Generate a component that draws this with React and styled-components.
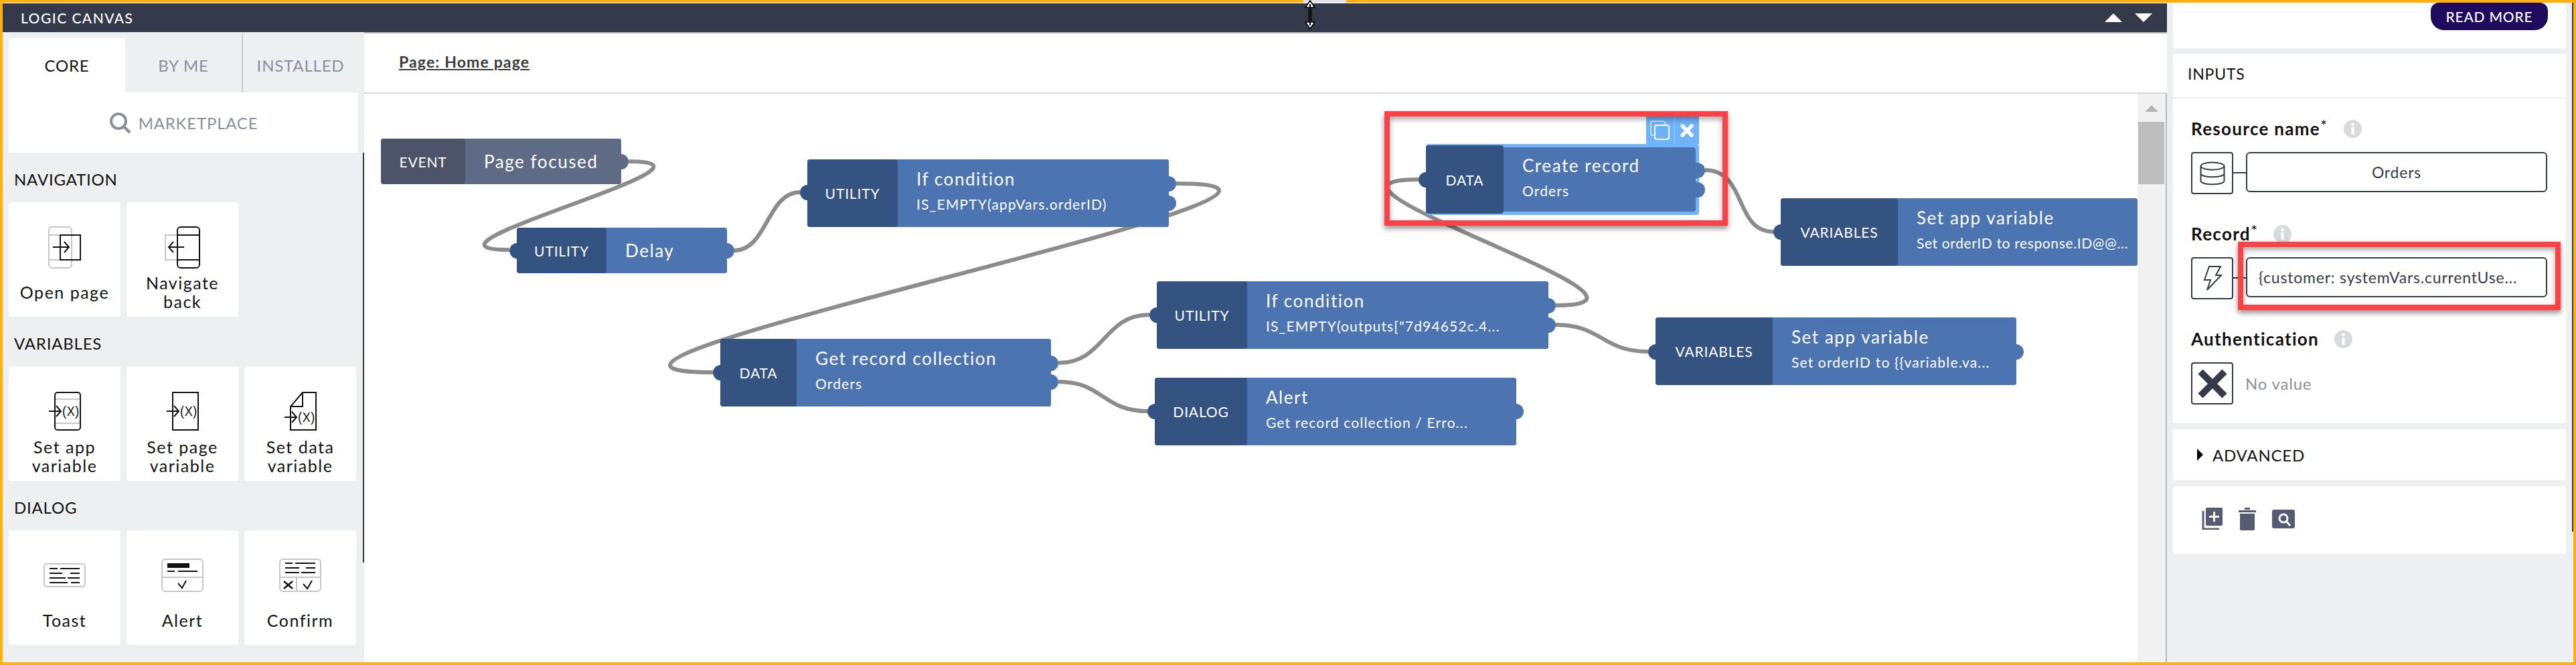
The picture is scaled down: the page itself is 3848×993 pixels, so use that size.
import React from "react";
import styled, { createGlobalStyle } from "styled-components";

const GlobalStyle = createGlobalStyle`
  html, body {
    margin: 0;
    padding: 0;
    overflow: hidden;
    background: #ffffff;
  }
  * {
    box-sizing: border-box;
  }
`
const FONT = `Lato, "Open Sans", "Liberation Sans", sans-serif`
const INK = "#353a4a"
const PANEL = "#eeeff1"
const SELECT = "#6eb3fb"

const Frame = styled.div`
  position: relative;
  width: 3848px;
  height: 993px;
  border: 4px solid #fdb00e;
  display: flex;
  font-family: ${FONT};
  letter-spacing: 0.05em;
  color: #111111;
  background: ${PANEL};
`
const TopNotch = styled.div`
  position: absolute;
  left: 1943px;
  top: -4px;
  width: 64px;
  height: 4px;
  background: #e0e0e6;
`
const Cursor = styled.svg`
  position: absolute;
  left: 1943px;
  top: -4px;
  z-index: 20;
`
const Main = styled.div`
  width: 3233px;
  display: flex;
  flex-direction: column;
`
const Header = styled.div`
  height: 44px;
  flex: none;
  border-top: 1px solid #ffffff;
  background: ${INK};
  display: flex;
  align-items: center;
  justify-content: space-between;
  padding: 0 22px 0 27px;
`
const HeaderTitle = styled.div`
  color: #ffffff;
  font-size: 21px;
  font-weight: 500;
  letter-spacing: 0.07em;
`
const HeaderArrows = styled.div`
  display: flex;
  gap: 19px;
`
const Triangle = styled.div`
  width: 0;
  height: 0;
  border-left: ${(p) => p.$w}px solid transparent;
  border-right: ${(p) => p.$w}px solid transparent;
  ${(p) => (p.$down ? "border-top" : "border-bottom")}: ${(p) => p.$h}px solid ${(p) => p.$color};
`
const Body = styled.div`
  flex: 1;
  min-height: 0;
  display: flex;
`
const LeftPanel = styled.div`
  position: relative;
  width: 540px;
  flex: none;
  padding: 0 9px;
  background: ${PANEL};
  &::after {
    content: "";
    position: absolute;
    right: 0;
    top: 180px;
    width: 2px;
    height: 612px;
    background: ${INK};
  }
`
const Tabs = styled.div`
  display: flex;
  height: 90px;
`
const Tab = styled.div`
  width: 174px;
  display: flex;
  align-items: center;
  justify-content: center;
  font-size: 24px;
  color: ${(p) => (p.$active ? "#111111" : "#8a8f9c")};
  background: ${(p) => (p.$active ? "#ffffff" : "transparent")};
  margin-top: ${(p) => (p.$active ? "9px" : "0")};
  padding-top: ${(p) => (p.$active ? "0" : "9px")};
  border-radius: 4px 4px 0 0;
  border-left: ${(p) => (p.$divider ? "2px solid #cfd0d4" : "none")};
`
const Marketplace = styled.div`
  height: 90px;
  width: 522px;
  background: #ffffff;
  display: flex;
  align-items: center;
  justify-content: center;
  gap: 11px;
  color: #8a8f9c;
  font-size: 24px;
`
const SectionLabel = styled.div`
  height: 74px;
  padding: 4px 0 0 8px;
  display: flex;
  align-items: center;
  font-size: 24px;
`
const CardGrid = styled.div`
  display: grid;
  grid-template-columns: repeat(3, 167px);
  column-gap: 9px;
`
const Card = styled.div`
  height: 171px;
  background: #ffffff;
  border-radius: 4px;
  padding-top: 28px;
  display: flex;
  flex-direction: column;
  align-items: center;
`
const CardIcon = styled.div`
  height: 78px;
  flex: none;
  display: flex;
  align-items: center;
  justify-content: center;
`
const CardLabel = styled.div`
  height: 56px;
  display: flex;
  align-items: center;
  text-align: center;
  font-size: 25px;
  line-height: 28px;
  letter-spacing: 0.06em;
`
const CanvasColumn = styled.div`
  flex: 1;
  min-width: 0;
  display: flex;
  flex-direction: column;
  background: #ffffff;
`
const PageBar = styled.div`
  height: 92px;
  flex: none;
  border-top: 2px solid #b9babd;
  border-bottom: 2px solid #d8d8de;
  display: flex;
  align-items: center;
  padding-left: 52px;
  padding-bottom: 4px;
`
const PageLink = styled.span`
  color: #3a3a3a;
  font-size: 23px;
  font-weight: 700;
  text-decoration: underline;
  letter-spacing: 0.05em;
`
const CanvasRow = styled.div`
  flex: 1;
  min-height: 0;
  display: flex;
`
const Stage = styled.div`
  position: relative;
  flex: 1;
  min-width: 0;
  overflow: hidden;
  background: #ffffff;
`
const Wires = styled.svg`
  position: absolute;
  left: 0;
  top: 0;
`
const CanvasScroll = styled.div`
  width: 44px;
  flex: none;
  background: #f1f1f1;
  border-right: 2px solid #b9babd;
  padding: 17px 2px 0 1px;
  display: flex;
  flex-direction: column;
  align-items: center;
`
const ScrollThumb = styled.div`
  width: 39px;
  height: 93px;
  margin-top: 15px;
  background: #bdbdbd;
`
const NodeBox = styled.div`
  position: absolute;
  left: ${(p) => p.$x}px;
  top: ${(p) => p.$y}px;
  width: ${(p) => p.$w}px;
  height: ${(p) => p.$h}px;
  display: flex;
  color: #ffffff;
  border-radius: 4px;
  background: ${(p) => (p.$selected ? SELECT : p.$event ? "#5f6a85" : "#4b74b1")};
`
const NodeLabel = styled.div`
  width: ${(p) => p.$w}px;
  flex: none;
  margin: ${(p) => (p.$selected ? "2px 0" : "0")};
  display: flex;
  align-items: center;
  justify-content: center;
  font-size: 21px;
  letter-spacing: 0.04em;
  border-radius: 4px;
  background: ${(p) => (p.$event ? "#4d5469" : "#345381")};
`
const NodeBody = styled.div`
  flex: 1;
  min-width: 0;
  margin: ${(p) => (p.$selected ? "5px 5px 5px 0" : "0")};
  padding: 0 0 ${(p) => (p.$double ? "7px" : "0")} 28px;
  display: flex;
  flex-direction: column;
  justify-content: center;
  gap: 10px;
  white-space: nowrap;
  overflow: hidden;
  background: ${(p) => (p.$event ? "#5f6a85" : "#4b74b1")};
  border-radius: 0 4px 4px 0;
`
const NodeTitle = styled.div`
  font-size: 26px;
  line-height: 30px;
  letter-spacing: 0.06em;
`
const NodeSub = styled.div`
  font-size: 21px;
  line-height: 26px;
  letter-spacing: ${(p) => (p.$tight ? "0.03em" : "0.055em")};
`
const Port = styled.div`
  position: absolute;
  width: 23px;
  height: 23px;
  border-radius: 50%;
  top: ${(p) => p.$y - 11.5}px;
  ${(p) => (p.$in ? "left: -11px;" : `right: ${p.$selected ? -9 : -11}px;`)}
  background: ${(p) => p.$color};
`
const NodeTools = styled.div`
  position: absolute;
  right: 0;
  top: -41px;
  height: 41px;
  background: ${SELECT};
  display: flex;
`
const NodeTool = styled.div`
  width: ${(p) => p.$w}px;
  display: flex;
  align-items: center;
  justify-content: center;
  border-right: ${(p) => (p.$divided ? "1px solid rgba(255, 255, 255, 0.3)" : "none")};
`
const RedBox = styled.div`
  position: absolute;
  left: ${(p) => p.$x}px;
  top: ${(p) => p.$y}px;
  width: ${(p) => p.$w}px;
  height: ${(p) => p.$h}px;
  border: 8px solid #ff4044;
  box-shadow: 0 4px 8px rgba(0, 0, 0, 0.45), inset 0 4px 8px rgba(0, 0, 0, 0.35);
  z-index: 10;
  pointer-events: none;
`
const RightPanel = styled.div`
  position: relative;
  flex: 1;
  min-width: 0;
  padding: 0 11px 0 9px;
  display: flex;
  flex-direction: column;
  gap: 9px;
  background: ${PANEL};
  &::after {
    content: "";
    position: absolute;
    right: 0;
    top: 0;
    width: 2px;
    height: 790px;
    background: ${INK};
  }
`
const InfoSection = styled.div`
  height: 68px;
  background: #ffffff;
  display: flex;
  justify-content: flex-end;
  align-items: flex-start;
  padding-right: 27px;
`
const ReadMore = styled.div`
  width: 175px;
  height: 41px;
  border-radius: 12px 12px 20px 20px;
  background: #1e0b5e;
  color: #ffffff;
  font-size: 21px;
  font-weight: 500;
  display: flex;
  align-items: center;
  justify-content: center;
`
const InputsSection = styled.div`
  height: 551px;
  background: #ffffff;
`
const InputsTitle = styled.div`
  height: 66px;
  border-bottom: 2px solid ${PANEL};
  padding: 0 0 6px 22px;
  display: flex;
  align-items: center;
  font-size: 23px;
`
const Fields = styled.div`
  padding: 10px 28px 0 27px;
`
const Field = styled.div`
  margin-bottom: 24px;
`
const FieldLabel = styled.div`
  height: 70px;
  display: flex;
  align-items: center;
  gap: 23px;
  font-size: 26px;
  font-weight: 700;
  letter-spacing: 0.05em;
  color: #111111;
`
const Asterisk = styled.span`
  font-size: 24px;
  font-weight: 400;
  line-height: 0;
  position: relative;
  top: -6px;
`
const FieldRow = styled.div`
  position: relative;
  display: flex;
  align-items: flex-start;
  height: 63px;
`
const IconBox = styled.div`
  width: 63px;
  height: 63px;
  flex: none;
  border: 2px solid ${INK};
  border-radius: 4px;
  display: flex;
  align-items: center;
  justify-content: center;
`
const Connector = styled.div`
  width: 19px;
  height: 2px;
  flex: none;
  margin-top: 30px;
  background: ${INK};
`
const ValueBox = styled.div`
  width: 450px;
  height: 60px;
  border: 2px solid ${INK};
  border-radius: 6px;
  display: flex;
  align-items: center;
  justify-content: ${(p) => (p.$left ? "flex-start" : "center")};
  padding-left: ${(p) => (p.$left ? "17px" : "0")};
  color: ${INK};
  font-size: 23px;
  white-space: nowrap;
  overflow: hidden;
`
const NoValue = styled.div`
  height: 63px;
  margin-left: 18px;
  display: flex;
  align-items: center;
  color: #8d8f96;
  font-size: 24px;
`
const FieldRedBox = styled(RedBox)`
  left: 70px;
  top: -23px;
  width: 482px;
  height: 102px;
`
const AdvancedSection = styled.div`
  height: 76px;
  background: #ffffff;
  display: flex;
  align-items: center;
  gap: 14px;
  padding-left: 36px;
  font-size: 24px;
`
const CaretRight = styled.div`
  width: 0;
  height: 0;
  border-top: 9px solid transparent;
  border-bottom: 9px solid transparent;
  border-left: 9px solid #000000;
`
const ActionsSection = styled.div`
  height: 101px;
  background: #ffffff;
  border-radius: 4px 4px 0 0;
  display: flex;
  align-items: center;
  padding: 0 0 4px 42px;
  gap: 24px;
`

// page coordinates of the stage corner, everything on the canvas below is measured from the page
const OX = 544
const OY = 140

const nodes = [
  { id: "event", x: 569, y: 207, w: 359, h: 68, lw: 126, label: "EVENT", title: "Page focused", event: true, outs: [34] },
  { id: "delay", x: 772, y: 340, w: 314, h: 68, lw: 134, label: "UTILITY", title: "Delay", ins: [34], outs: [34] },
  { id: "if1", x: 1206, y: 238, w: 540, h: 101, lw: 135, label: "UTILITY", title: "If condition", sub: "IS_EMPTY(appVars.orderID)", ins: [49], outs: [36, 65] },
  { id: "get", x: 1076, y: 506, w: 494, h: 101, lw: 114, label: "DATA", title: "Get record collection", sub: "Orders", ins: [50], outs: [36, 64] },
  { id: "create", x: 2130, y: 215, w: 408, h: 106, lw: 116, label: "DATA", title: "Create record", sub: "Orders", selected: true, ins: [53], outs: [39, 68] },
  { id: "vars1", x: 2660, y: 296, w: 533, h: 101, lw: 175, label: "VARIABLES", title: "Set app variable", sub: "Set orderID to response.ID@@...", tight: true, ins: [50] },
  { id: "if2", x: 1728, y: 420, w: 585, h: 101, lw: 135, label: "UTILITY", title: "If condition", sub: 'IS_EMPTY(outputs["7d94652c.4...', ins: [50], outs: [36, 65] },
  { id: "vars2", x: 2473, y: 474, w: 539, h: 101, lw: 175, label: "VARIABLES", title: "Set app variable", sub: "Set orderID to {{variable.va...", ins: [51], outs: [51] },
  { id: "alert", x: 1725, y: 564, w: 540, h: 101, lw: 138, label: "DIALOG", title: "Alert", sub: "Get record collection / Erro...", ins: [50], outs: [50] },
]

const wires = [
  "M939 241 C1119 241 581 373 761 373",
  "M1097 374 C1146 374 1146 287 1195 287",
  "M1757 274 C2137 274 685 556 1065 556",
  "M1581 542 C1650 542 1648 470 1717 470",
  "M1581 570 C1648 570 1647 614 1714 614",
  "M2324 456 C2544 456 1899 268 2119 268",
  "M2547 254 C2610 254 2590 346 2649 346",
  "M2324 485 C2393 485 2393 525 2462 525",
]

const stroke = { fill: "none", stroke: "#111111", strokeWidth: 2 }
const gray = { fill: "none", stroke: "#c5c6cc", strokeWidth: 2 }

const ArrowRight = ({ x1, x2, y }) => (
  <path d={`M${x1} ${y} H${x2} M${x2 - 7} ${y - 8} L${x2} ${y} L${x2 - 7} ${y + 8}`} {...stroke} />
)

const OpenPageIcon = () => (
  <svg width="50" height="63" viewBox="0 0 50 63">
    <rect x="1" y="1" width="34" height="61" rx="5" {...gray} />
    <path d="M1 13 H35 M1 50 H35" {...gray} />
    <rect x="18" y="13" width="30" height="37" {...stroke} />
    <ArrowRight x1={7} x2={31} y={31} />
  </svg>
)

const NavigateBackIcon = () => (
  <svg width="54" height="63" viewBox="0 0 54 63">
    <rect x="1" y="13" width="30" height="37" {...gray} />
    <rect x="19" y="1" width="33" height="61" rx="5" fill="#ffffff" stroke="#111111" strokeWidth="2" />
    <path d="M19 13 H52 M19 50 H52" {...stroke} />
    <path d="M29 31 H6 M13 23 L6 31 L13 39" {...stroke} />
  </svg>
)

const VarText = ({ x, y }) => (
  <text x={x} y={y} fontFamily="Liberation Sans, sans-serif" fontSize="21" fill="#111111" textLength="26" lengthAdjust="spacingAndGlyphs">
    (X)
  </text>
)

const VarSvg = ({ children }) => (
  <svg width="60" height="70" viewBox="-6 -6 60 70">{children}</svg>
)

const SetAppIcon = () => (
  <VarSvg>
    <rect x="9" y="1" width="38" height="56" rx="4" {...stroke} />
    <path d="M10 11 H46 M10 47 H46" {...gray} />
    <ArrowRight x1={0} x2={18} y={29} />
    <VarText x={20} y={36} />
  </VarSvg>
)

const SetPageIcon = () => (
  <VarSvg>
    <rect x="9" y="1" width="38" height="56" {...stroke} />
    <ArrowRight x1={0} x2={18} y={29} />
    <VarText x={20} y={36} />
  </VarSvg>
)

const SetDataIcon = () => (
  <VarSvg>
    <path d="M27 1 H47 V57 H9 V22 Z" {...stroke} />
    <path d="M27 1 V22 H9" {...stroke} />
    <ArrowRight x1={0} x2={18} y={38} />
    <VarText x={20} y={45} />
  </VarSvg>
)

const ToastIcon = () => (
  <svg width="63" height="36" viewBox="0 0 63 36">
    <rect x="1" y="1" width="61" height="34" rx="4" fill="none" stroke="#c5c6cc" strokeWidth="2" />
    <path d="M9 8 H21 M25 8 H54 M9 15 H28 M40 15 H54 M9 22 H33 M36 22 H54 M9 29 H36 M41 29 H54" {...stroke} />
  </svg>
)

const AlertIcon = () => (
  <svg width="63" height="50" viewBox="0 0 63 50">
    <rect x="1" y="1" width="61" height="48" rx="5" fill="none" stroke="#c5c6cc" strokeWidth="2" />
    <path d="M1 28 H62" {...gray} />
    <rect x="9" y="7" width="33" height="7" fill="#111111" />
    <path d="M9 19 H20 M25 19 H54" {...stroke} />
    <path d="M25 37 L31 44 L37 33" {...stroke} />
  </svg>
)

const ConfirmIcon = () => (
  <svg width="63" height="50" viewBox="0 0 63 50">
    <rect x="1" y="1" width="61" height="48" rx="5" fill="none" stroke="#c5c6cc" strokeWidth="2" />
    <path d="M1 28 H62 M26 28 V49" {...gray} />
    <path d="M9 7 H20 M24 7 H54 M9 14 H30 M40 14 H54 M9 21 H30 M33 21 H54" {...stroke} />
    <path d="M7 34 L20 45 M20 34 L7 45" fill="none" stroke="#111111" strokeWidth="2.5" />
    <path d="M36 38 L42 45 L49 33" {...stroke} />
  </svg>
)

const SearchIcon = () => (
  <svg width="33" height="33" viewBox="0 0 33 33">
    <circle cx="14" cy="14" r="11" fill="none" stroke="#8a8f9c" strokeWidth="4" />
    <path d="M22 22 L31 31" stroke="#8a8f9c" strokeWidth="4.5" />
  </svg>
)

const InfoIcon = () => (
  <svg width="27" height="27" viewBox="0 0 27 27">
    <circle cx="13.5" cy="13.5" r="13.5" fill="#d8dade" />
    <circle cx="13.5" cy="7" r="2.5" fill="#ffffff" />
    <rect x="11.5" y="11" width="4" height="11" fill="#ffffff" />
  </svg>
)

const DatabaseIcon = () => (
  <svg width="38" height="36" viewBox="0 0 38 36">
    <ellipse cx="19" cy="7" rx="17.5" ry="5.5" fill="none" stroke={INK} strokeWidth="2" />
    <path d="M1.5 7 V29 C1.5 36 36.5 36 36.5 29 V7 M1.5 18 C1.5 25 36.5 25 36.5 18" fill="none" stroke={INK} strokeWidth="2" />
  </svg>
)

const BoltIcon = () => (
  <svg width="28" height="38" viewBox="0 0 28 38">
    <path d="M9 1 H26 L19 14 H27 L6 36 L11 21 H2 Z" fill="none" stroke={INK} strokeWidth="2" />
  </svg>
)

const CrossIcon = () => (
  <svg width="46" height="46" viewBox="0 0 46 46">
    <path d="M5 5 L41 41 M41 5 L5 41" stroke={INK} strokeWidth="10" />
  </svg>
)

const CopyPlusIcon = () => (
  <svg width="32" height="33" viewBox="0 0 32 33">
    <path d="M3 5 V32 H27" fill="none" stroke="#545b73" strokeWidth="3" />
    <rect x="7" y="0" width="25" height="27" rx="2" fill="#545b73" />
    <path d="M19.5 6 V21 M12 13.5 H27" stroke="#ffffff" strokeWidth="3" />
  </svg>
)

const TrashIcon = () => (
  <svg width="26" height="34" viewBox="0 0 26 34">
    <path d="M0 4 H26 V7 H0 Z M9 0 H17 V3 H9 Z" fill="#545b73" />
    <path d="M2 9 H24 V32 Q24 34 22 34 H4 Q2 34 2 32 Z" fill="#545b73" />
  </svg>
)

const SearchSquareIcon = () => (
  <svg width="34" height="28" viewBox="0 0 34 28">
    <rect width="34" height="28" rx="3" fill="#545b73" />
    <circle cx="17" cy="13" r="6" fill="none" stroke="#ffffff" strokeWidth="3" />
    <path d="M21 17 L27 24" stroke="#ffffff" strokeWidth="3" />
  </svg>
)

const CopyToolIcon = () => (
  <svg width="30" height="30" viewBox="0 0 30 30">
    <rect x="1" y="1" width="21" height="21" rx="3" fill="none" stroke="#ffffff" strokeWidth="1.5" opacity="0.75" />
    <rect x="7" y="7" width="21" height="21" rx="3" fill={SELECT} stroke="#ffffff" strokeWidth="2" />
  </svg>
)

const CloseToolIcon = () => (
  <svg width="22" height="20" viewBox="0 0 22 20">
    <path d="M4 3 L18 17 M18 3 L4 17" stroke="#ffffff" strokeWidth="5.5" strokeLinecap="round" />
  </svg>
)

const paletteGroups = [
  {
    title: "NAVIGATION",
    items: [
      { label: "Open page", icon: <OpenPageIcon /> },
      { label: <>Navigate<br />back</>, icon: <NavigateBackIcon /> },
    ],
  },
  {
    title: "VARIABLES",
    items: [
      { label: <>Set app<br />variable</>, icon: <SetAppIcon /> },
      { label: <>Set page<br />variable</>, icon: <SetPageIcon /> },
      { label: <>Set data<br />variable</>, icon: <SetDataIcon /> },
    ],
  },
  {
    title: "DIALOG",
    items: [
      { label: "Toast", icon: <ToastIcon /> },
      { label: "Alert", icon: <AlertIcon /> },
      { label: "Confirm", icon: <ConfirmIcon /> },
    ],
  },
]

function FlowNode({ node }) {
  const bodyColor = node.event ? "#5f6a85" : "#4b74b1"
  const labelColor = node.event ? "#4d5469" : "#345381"
  return (
    <NodeBox $x={node.x - OX} $y={node.y - OY} $w={node.w} $h={node.h} $event={node.event} $selected={node.selected}>
      <NodeLabel $w={node.lw} $event={node.event} $selected={node.selected}>{node.label}</NodeLabel>
      <NodeBody $event={node.event} $selected={node.selected} $double={!!node.sub}>
        <NodeTitle>{node.title}</NodeTitle>
        {node.sub && <NodeSub $tight={node.tight}>{node.sub}</NodeSub>}
      </NodeBody>
      {(node.ins || []).map((y) => <Port key={y} $in $y={y} $color={labelColor} />)}
      {(node.outs || []).map((y) => <Port key={y} $y={y} $color={bodyColor} $selected={node.selected} />)}
      {node.selected && (
        <NodeTools>
          <NodeTool $w={43} $divided><CopyToolIcon /></NodeTool>
          <NodeTool $w={36}><CloseToolIcon /></NodeTool>
        </NodeTools>
      )}
    </NodeBox>
  )
}

export default function App() {
  return (
    <>
      <GlobalStyle />
      <Frame>
        <TopNotch />
        <Cursor width="20" height="44" viewBox="0 0 20 44">
          <path d="M10 1 L17 11 H12 V33 H17 L10 43 L3 33 H8 V11 H3 Z" fill="#ffffff" stroke="#000000" strokeWidth="1.6" />
          <path d="M10 6 V38" stroke="#000000" strokeWidth="2" />
        </Cursor>
        <Main>
          <Header>
            <HeaderTitle>LOGIC CANVAS</HeaderTitle>
            <HeaderArrows>
              <Triangle $w={13} $h={13} $color="#ffffff" />
              <Triangle $w={13} $h={13} $color="#ffffff" $down />
            </HeaderArrows>
          </Header>
          <Body>
            <LeftPanel>
              <Tabs>
                <Tab $active>CORE</Tab>
                <Tab>BY ME</Tab>
                <Tab $divider>INSTALLED</Tab>
              </Tabs>
              <Marketplace>
                <SearchIcon />
                MARKETPLACE
              </Marketplace>
              {paletteGroups.map((group) => (
                <div key={group.title}>
                  <SectionLabel>{group.title}</SectionLabel>
                  <CardGrid>
                    {group.items.map((item, i) => (
                      <Card key={i}>
                        <CardIcon>{item.icon}</CardIcon>
                        <CardLabel>{item.label}</CardLabel>
                      </Card>
                    ))}
                  </CardGrid>
                </div>
              ))}
            </LeftPanel>
            <CanvasColumn>
              <PageBar>
                <PageLink>Page: Home page</PageLink>
              </PageBar>
              <CanvasRow>
                <Stage>
                  <Wires width="2649" height="849" viewBox={`${OX} ${OY} 2649 849`}>
                    {wires.map((d) => (
                      <path key={d} d={d} fill="none" stroke="#8c8c8c" strokeWidth="6" />
                    ))}
                  </Wires>
                  {nodes.map((node) => <FlowNode key={node.id} node={node} />)}
                  <RedBox $x={2068 - OX} $y={166 - OY} $w={513} $h={171} />
                </Stage>
                <CanvasScroll>
                  <Triangle $w={10} $h={10} $color="#b5b5b5" />
                  <ScrollThumb />
                </CanvasScroll>
              </CanvasRow>
            </CanvasColumn>
          </Body>
        </Main>
        <RightPanel>
          <InfoSection>
            <ReadMore>READ MORE</ReadMore>
          </InfoSection>
          <InputsSection>
            <InputsTitle>INPUTS</InputsTitle>
            <Fields>
              <Field>
                <FieldLabel>
                  <span>Resource name<Asterisk>*</Asterisk></span>
                  <InfoIcon />
                </FieldLabel>
                <FieldRow>
                  <IconBox><DatabaseIcon /></IconBox>
                  <Connector />
                  <ValueBox>Orders</ValueBox>
                </FieldRow>
              </Field>
              <Field>
                <FieldLabel>
                  <span>Record<Asterisk>*</Asterisk></span>
                  <InfoIcon />
                </FieldLabel>
                <FieldRow>
                  <IconBox><BoltIcon /></IconBox>
                  <Connector />
                  <ValueBox $left>{"{customer: systemVars.currentUse..."}</ValueBox>
                  <FieldRedBox />
                </FieldRow>
              </Field>
              <Field>
                <FieldLabel>
                  <span>Authentication</span>
                  <InfoIcon />
                </FieldLabel>
                <FieldRow>
                  <IconBox><CrossIcon /></IconBox>
                  <NoValue>No value</NoValue>
                </FieldRow>
              </Field>
            </Fields>
          </InputsSection>
          <AdvancedSection>
            <CaretRight />
            ADVANCED
          </AdvancedSection>
          <ActionsSection>
            <CopyPlusIcon />
            <TrashIcon />
            <SearchSquareIcon />
          </ActionsSection>
        </RightPanel>
      </Frame>
    </>
  )
}
